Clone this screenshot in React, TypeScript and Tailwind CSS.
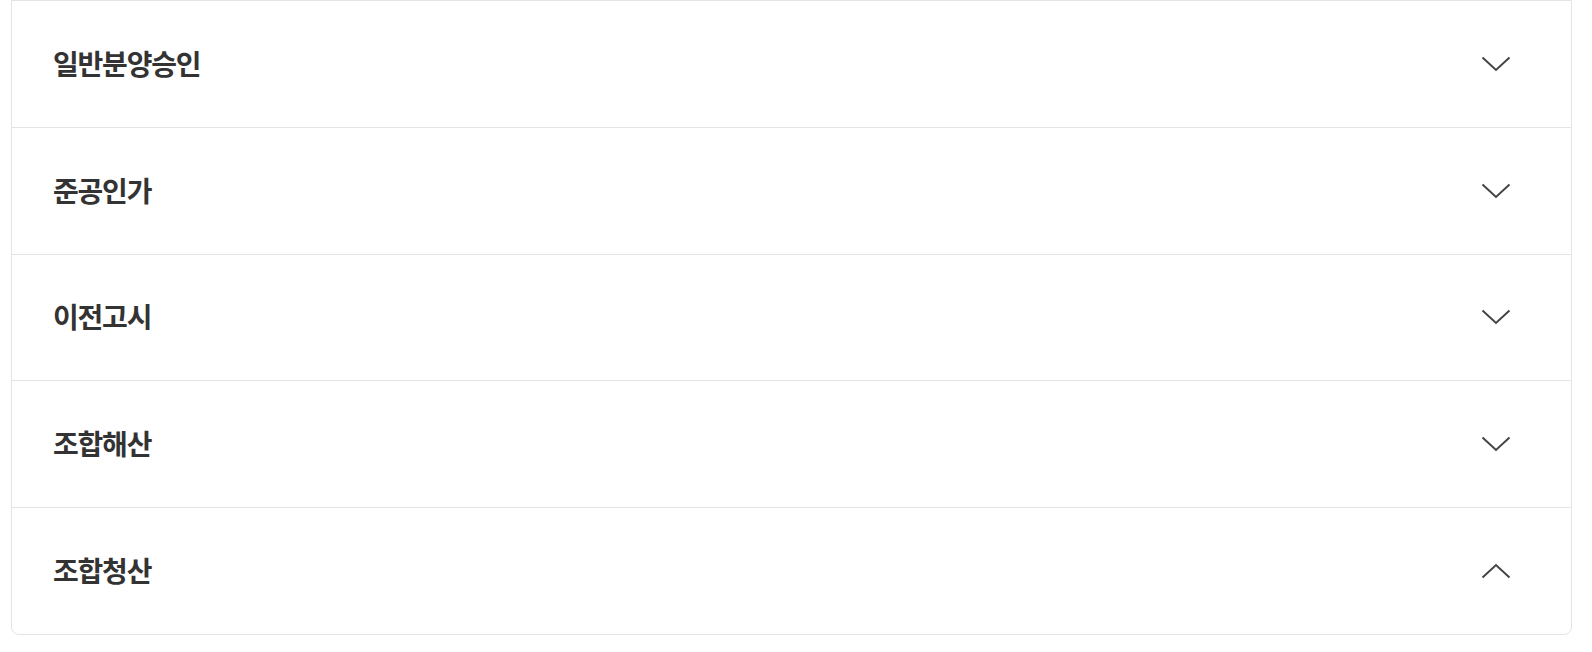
const items = [
  { title: "일반분양승인", open: false },
  { title: "준공인가", open: false },
  { title: "이전고시", open: false },
  { title: "조합해산", open: false },
  { title: "조합청산", open: true },
];

function Chevron({ up }: { up: boolean }) {
  return (
    <svg width="30" height="18" viewBox="0 0 30 18" fill="none">
      {up ? (
        <path d="M1.5 15.5 L15 3 L28.5 15.5" stroke="#444444" strokeWidth="2" strokeLinecap="butt" strokeLinejoin="miter" />
      ) : (
        <path d="M1.5 2.5 L15 15 L28.5 2.5" stroke="#444444" strokeWidth="2" strokeLinecap="butt" strokeLinejoin="miter" />
      )}
    </svg>
  );
}

export default function App() {
  return (
    <div className="w-[1592px] h-[652px] bg-white" style={{ fontFamily: '"Noto Sans CJK KR", "Noto Sans", sans-serif' }}>
      <div className="ml-[11px] w-[1561px] border border-[#e3e3e8] rounded-b-[8px] bg-white">
        {items.map((it, i) => (
          <div
            key={it.title}
            className={`flex items-center justify-between ${i < items.length - 1 ? "h-[126.8px] border-b border-[#e3e3e8]" : "h-[125.8px]"} pl-[41px] pr-[60px]`}
          >
            <span className="text-[28px] leading-[40px] font-bold text-[#333333] tracking-[-1.2px] -mt-[2px]">{it.title}</span>
            <Chevron up={it.open} />
          </div>
        ))}
      </div>
    </div>
  );
}
